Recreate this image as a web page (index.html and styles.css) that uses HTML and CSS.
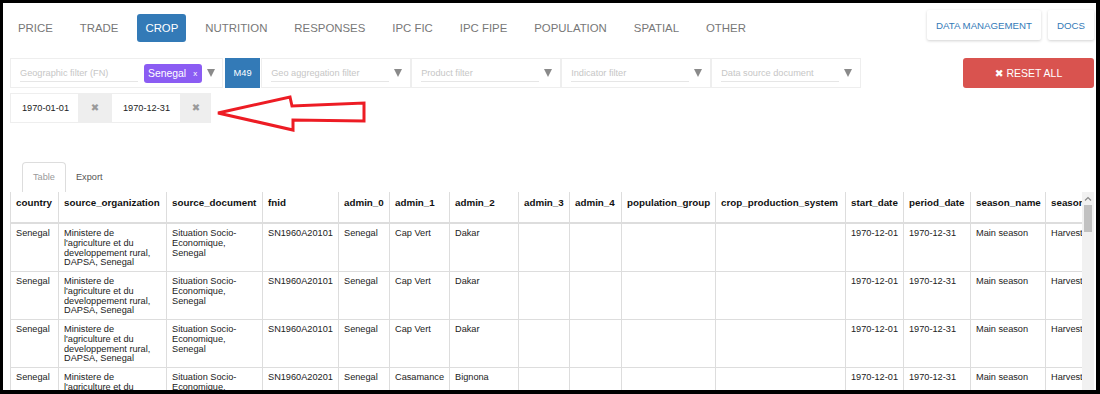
FILE: index.html
```html
<!DOCTYPE html>
<html lang="en">
  <head>
    <meta charset="UTF-8" />
    <meta name="viewport" content="width=device-width, initial-scale=1.0" />
    <title>Crop Data</title>
    <link rel="stylesheet" href="styles.css">
  </head>
  <body>
    <div class="frame">
      <div class="page">
        <header class="topbar">
          <nav class="pills">
            <a class="pill">PRICE</a>
            <a class="pill">TRADE</a>
            <a class="pill active">CROP</a>
            <a class="pill">NUTRITION</a>
            <a class="pill">RESPONSES</a>
            <a class="pill">IPC FIC</a>
            <a class="pill">IPC FIPE</a>
            <a class="pill">POPULATION</a>
            <a class="pill">SPATIAL</a>
            <a class="pill">OTHER</a>
          </nav>
          <div class="top-actions">
            <button class="flat-btn">DATA MANAGEMENT</button>
            <button class="flat-btn">DOCS</button>
          </div>
        </header>

        <div class="filters">
          <div class="filter-box geo-box">
            <span class="filter-input">Geographic filter (FN)</span>
            <span class="chip">Senegal<span class="chip-x">x</span></span>
            <span class="caret"></span>
          </div>
          <div class="m49">M49</div>
          <div class="filter-box">
            <span class="filter-input">Geo aggregation filter</span>
            <span class="caret"></span>
          </div>
          <div class="filter-box">
            <span class="filter-input">Product filter</span>
            <span class="caret"></span>
          </div>
          <div class="filter-box">
            <span class="filter-input">Indicator filter</span>
            <span class="caret"></span>
          </div>
          <div class="filter-box">
            <span class="filter-input">Data source document</span>
            <span class="caret"></span>
          </div>
          <button class="reset-btn">&#10006; RESET ALL</button>
        </div>

        <div class="dates">
          <span class="date-field">1970-01-01</span>
          <span class="date-clear">&#10006;</span>
          <span class="date-field second">1970-12-31</span>
          <span class="date-clear second">&#10006;</span>
          <svg class="arrow" width="152" height="38" viewBox="0 0 152 38">
            <polygon points="3,18 75,2 77,11 149,8 149,26 78,25 78,35" fill="none" stroke="#ed1c24" stroke-width="3" stroke-linejoin="miter" />
          </svg>
        </div>

        <div class="tabs">
          <span class="tab active">Table</span>
          <span class="tab">Export</span>
        </div>

        <div class="grid-wrap">
          <div class="grid-scroll">
            <table class="grid">
              <colgroup>
                <col class="w48"><col class="w108"><col class="w96"><col class="w76">
                <col class="w51"><col class="w60"><col class="w69"><col class="w51">
                <col class="w52"><col class="w94"><col class="w130"><col class="w58">
                <col class="w67"><col class="w75"><col class="w80">
              </colgroup>
              <thead>
                <tr>
                  <th>country</th><th>source_organization</th><th>source_document</th><th>fnid</th>
                  <th>admin_0</th><th>admin_1</th><th>admin_2</th><th>admin_3</th><th>admin_4</th>
                  <th>population_group</th><th>crop_production_system</th><th>start_date</th>
                  <th>period_date</th><th>season_name</th><th>season_type</th>
                </tr>
              </thead>
              <tbody>
                <tr>
                  <td>Senegal</td><td>Ministere de l'agriculture et du developpement rural, DAPSA, Senegal</td>
                  <td>Situation Socio-Economique, Senegal</td><td>SN1960A20101</td><td>Senegal</td>
                  <td>Cap Vert</td><td>Dakar</td><td></td><td></td><td></td><td></td>
                  <td>1970-12-01</td><td>1970-12-31</td><td>Main season</td><td>Harvest</td>
                </tr>
                <tr>
                  <td>Senegal</td><td>Ministere de l'agriculture et du developpement rural, DAPSA, Senegal</td>
                  <td>Situation Socio-Economique, Senegal</td><td>SN1960A20101</td><td>Senegal</td>
                  <td>Cap Vert</td><td>Dakar</td><td></td><td></td><td></td><td></td>
                  <td>1970-12-01</td><td>1970-12-31</td><td>Main season</td><td>Harvest</td>
                </tr>
                <tr>
                  <td>Senegal</td><td>Ministere de l'agriculture et du developpement rural, DAPSA, Senegal</td>
                  <td>Situation Socio-Economique, Senegal</td><td>SN1960A20101</td><td>Senegal</td>
                  <td>Cap Vert</td><td>Dakar</td><td></td><td></td><td></td><td></td>
                  <td>1970-12-01</td><td>1970-12-31</td><td>Main season</td><td>Harvest</td>
                </tr>
                <tr>
                  <td>Senegal</td><td>Ministere de l'agriculture et du developpement rural, DAPSA, Senegal</td>
                  <td>Situation Socio-Economique, Senegal</td><td>SN1960A20201</td><td>Senegal</td>
                  <td>Casamance</td><td>Bignona</td><td></td><td></td><td></td><td></td>
                  <td>1970-12-01</td><td>1970-12-31</td><td>Main season</td><td>Harvest</td>
                </tr>
              </tbody>
            </table>
          </div>
          <div class="scrollbar">
            <svg class="sb-up" width="8" height="5" viewBox="0 0 8 5">
              <polyline points="1,4.5 4,1.5 7,4.5" fill="none" stroke="#8a8a8a" stroke-width="1.2" />
            </svg>
            <span class="sb-thumb"></span>
          </div>
        </div>
      </div>
    </div>
  </body>
</html>
```

FILE: styles.css
```css
body {
  margin: 0;
  padding: 0;
  background-color: #fff;
  font-family: "Liberation Sans", Arial, sans-serif;
}
.frame {
  width: 1100px;
  height: 394px;
  box-sizing: border-box;
  border-style: solid;
  border-color: #000;
  border-width: 3px 4px 4px 3px;
  overflow: hidden;
  background-color: #fff;
}
.page {
  padding: 7px 2px 0 7px;
}

/* top navigation */
.topbar {
  display: flex;
  justify-content: space-between;
  align-items: flex-start;
}
.pills {
  display: flex;
  gap: 11px;
  margin-top: 4px;
}
.pill {
  display: block;
  height: 28px;
  line-height: 28px;
  padding: 0 8px;
  font-size: 11.4px;
  color: #777;
  border-radius: 3px;
}
.pill.active {
  background-color: #337ab7;
  color: #fff;
}
.top-actions {
  display: flex;
  gap: 7px;
}
.flat-btn {
  height: 30px;
  padding: 0 9px;
  border: 0;
  border-radius: 2px;
  background-color: #fff;
  color: #337ab7;
  font-family: "Liberation Sans", Arial, sans-serif;
  font-size: 9.7px;
  box-shadow: 0 1px 3px rgba(0, 0, 0, 0.18);
}

/* filter row */
.filters {
  display: flex;
  height: 30px;
  margin-top: 16px;
}
.filter-box {
  display: flex;
  align-items: center;
  width: 150px;
  box-sizing: border-box;
  border: 1px solid #eee;
  padding: 0 8px 0 9px;
}
.geo-box {
  width: auto;
  padding-right: 7px;
}
.m49 + .filter-box {
  margin-left: 1px;
}
.filter-input {
  width: 118px;
  height: 16px;
  line-height: 16px;
  font-size: 9.2px;
  color: #c6c6c6;
  border-bottom: 1.5px solid #e6e6e6;
  white-space: nowrap;
  overflow: hidden;
}
.caret {
  width: 0;
  height: 0;
  margin-left: 5px;
  border-left: 4px solid transparent;
  border-right: 4px solid transparent;
  border-top: 8px solid #8a8a8a;
}
.chip {
  display: flex;
  align-items: center;
  height: 19px;
  margin-left: 6px;
  padding: 0 5px 0 4px;
  border-radius: 3px;
  background-color: #8b5cf3;
  color: #fff;
  font-size: 10.4px;
}
.chip-x {
  margin-left: 7px;
  font-size: 8px;
}
.m49 {
  width: 35px;
  margin-left: 2px;
  line-height: 30px;
  text-align: center;
  background-color: #337ab7;
  color: #fff;
  font-size: 9.3px;
}
.reset-btn {
  width: 131px;
  height: 30px;
  margin-left: auto;
  border: 0;
  border-radius: 3px;
  background-color: #d9534f;
  color: #fff;
  font-family: "Liberation Sans", "DejaVu Sans", Arial, sans-serif;
  font-size: 10.5px;
}

/* date range */
.dates {
  position: relative;
  display: flex;
  height: 30px;
  margin-top: 5px;
}
.date-field {
  width: 69px;
  box-sizing: border-box;
  border: 1px solid #eee;
  padding-left: 11px;
  line-height: 28px;
  font-size: 9.2px;
  color: #222;
}
.date-field.second {
  width: 70px;
}
.date-clear {
  width: 32px;
  line-height: 30px;
  text-align: center;
  background-color: #eee;
  color: #9a9a9a;
  font-family: "DejaVu Sans", sans-serif;
  font-size: 10px;
}
.date-clear.second {
  width: 30px;
}
.arrow {
  position: absolute;
  left: 205px;
  top: 2px;
}

/* tabs */
.tabs {
  display: flex;
  height: 30px;
  margin-top: 39px;
  padding-left: 12px;
}
.tab {
  padding: 0 10px;
  line-height: 30px;
  font-size: 9.2px;
  color: #555;
}
.tab.active {
  border: 1px solid #ddd;
  border-bottom: 0;
  border-radius: 4px 4px 0 0;
  line-height: 29px;
  color: #9a9a9a;
}

/* table */
.grid-wrap {
  display: flex;
  height: 200px;
}
.grid-scroll {
  width: 1072px;
  overflow: hidden;
}
.grid {
  width: 1095px;
  table-layout: fixed;
  border-collapse: collapse;
}
.grid th,
.grid td {
  border-left: 1px solid #ddd;
  text-align: left;
  vertical-align: top;
}
.grid th {
  padding: 5px 5px 13px;
  line-height: 12px;
  font-size: 9.8px;
  font-weight: bold;
  color: #111;
  border-bottom: 2px solid #ddd;
  white-space: nowrap;
  overflow: hidden;
}
.grid td {
  padding: 5px 5px 3px;
  line-height: 9.75px;
  font-size: 9.2px;
  color: #222;
  border-bottom: 1px solid #ddd;
  overflow: hidden;
}
.grid td:nth-child(n+4) {
  white-space: nowrap;
}
.w48 { width: 48px; }
.w108 { width: 108px; }
.w96 { width: 96px; }
.w76 { width: 76px; }
.w51 { width: 51px; }
.w60 { width: 60px; }
.w69 { width: 69px; }
.w52 { width: 52px; }
.w94 { width: 94px; }
.w130 { width: 130px; }
.w58 { width: 58px; }
.w67 { width: 67px; }
.w75 { width: 75px; }
.w80 { width: 80px; }

.scrollbar {
  display: flex;
  flex-direction: column;
  align-items: center;
  width: 12px;
  background-color: #f1f1f1;
  padding-top: 4px;
}
.sb-thumb {
  width: 8px;
  height: 27px;
  margin-top: 4px;
  background-color: #c1c1c1;
}
```
